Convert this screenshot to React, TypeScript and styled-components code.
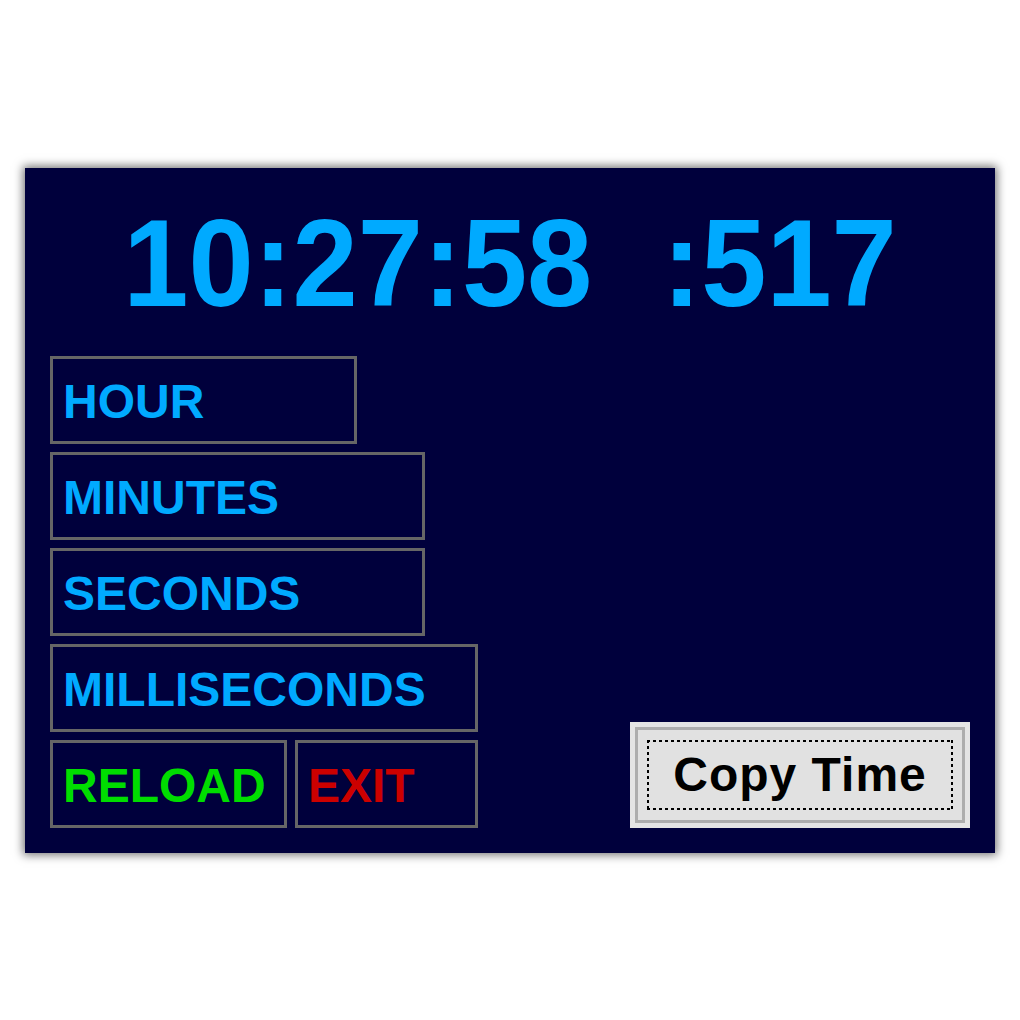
import React, { FC } from 'react'
import styled, { createGlobalStyle } from 'styled-components'

const GlobalStyle = createGlobalStyle`
  html, body {
    margin: 0;
    padding: 0;
    background: #ffffff;
  }
  #root {
    min-height: 100vh;
    display: flex;
    align-items: center;
    justify-content: center;
  }
`

const Panel = styled.div({
  boxSizing: 'border-box',
  width: '970px',
  height: '685px',
  padding: '25px',
  backgroundColor: '#00003c',
  boxShadow: '0 0 9px 2px rgba(0, 0, 0, 0.55)',
  display: 'flex',
  flexDirection: 'column',
  fontFamily: '"Liberation Sans", Arial, sans-serif',
  fontWeight: 700,
})

const Clock = styled.div({
  marginTop: '8px',
  display: 'flex',
  justifyContent: 'center',
  gap: '74px',
  fontSize: '124px',
  lineHeight: 1,
  color: '#00aaff',
  transform: 'scaleX(0.945)',
})

const Body = styled.div({
  marginTop: '31px',
  flex: 1,
  display: 'flex',
  justifyContent: 'space-between',
  alignItems: 'flex-end',
})

const Column = styled.div({
  display: 'flex',
  flexDirection: 'column',
  gap: '8px',
})

const Row = styled.div({
  display: 'flex',
  gap: '8px',
})

const Field = styled.div<{ width: number; tone?: string }>(({ width, tone }) => ({
  boxSizing: 'border-box',
  width: `${width}px`,
  height: '88px',
  border: '3px solid #666666',
  padding: '4px 0 0 10px',
  display: 'flex',
  alignItems: 'center',
  fontSize: '48px',
  lineHeight: 1,
  color: tone ?? '#00aaff',
  whiteSpace: 'nowrap',
}))

const CopyButton = styled.button({
  boxSizing: 'border-box',
  width: '340px',
  height: '106px',
  padding: '5px',
  border: 'none',
  backgroundColor: '#e4e4e4',
  display: 'flex',
  alignItems: 'stretch',
  cursor: 'pointer',
})

const ButtonFrame = styled.div({
  flex: 1,
  border: '3px solid #adadad',
  backgroundColor: '#e1e1e1',
  padding: '10px 9px',
  display: 'flex',
})

const dots = (angle: number) =>
  `repeating-linear-gradient(${angle}deg, #000 0 3px, transparent 3px 6px)`

const FocusRing = styled.div({
  flex: 1,
  backgroundImage: [dots(90), dots(90), dots(180), dots(180)].join(', '),
  backgroundPosition: 'left top, left bottom, left top, right top',
  backgroundSize: '100% 2px, 100% 2px, 2px 100%, 2px 100%',
  backgroundRepeat: 'no-repeat',
  display: 'flex',
  alignItems: 'center',
  justifyContent: 'center',
  fontFamily: '"Liberation Sans", Arial, sans-serif',
  fontWeight: 700,
  fontSize: '48px',
  letterSpacing: '1px',
  lineHeight: 1,
  color: '#000000',
})

const App: FC = () => {
  return (
    <>
      <GlobalStyle />
      <Panel>
        <Clock>
          <span>10:27:58</span>
          <span>:517</span>
        </Clock>

        <Body>
          <Column>
            <Field width={307}>HOUR</Field>
            <Field width={375}>MINUTES</Field>
            <Field width={375}>SECONDS</Field>
            <Field width={428}>MILLISECONDS</Field>
            <Row>
              <Field width={237} tone="#00dd00">RELOAD</Field>
              <Field width={183} tone="#cc0000">EXIT</Field>
            </Row>
          </Column>

          <CopyButton>
            <ButtonFrame>
              <FocusRing>Copy Time</FocusRing>
            </ButtonFrame>
          </CopyButton>
        </Body>
      </Panel>
    </>
  )
}

export default App
